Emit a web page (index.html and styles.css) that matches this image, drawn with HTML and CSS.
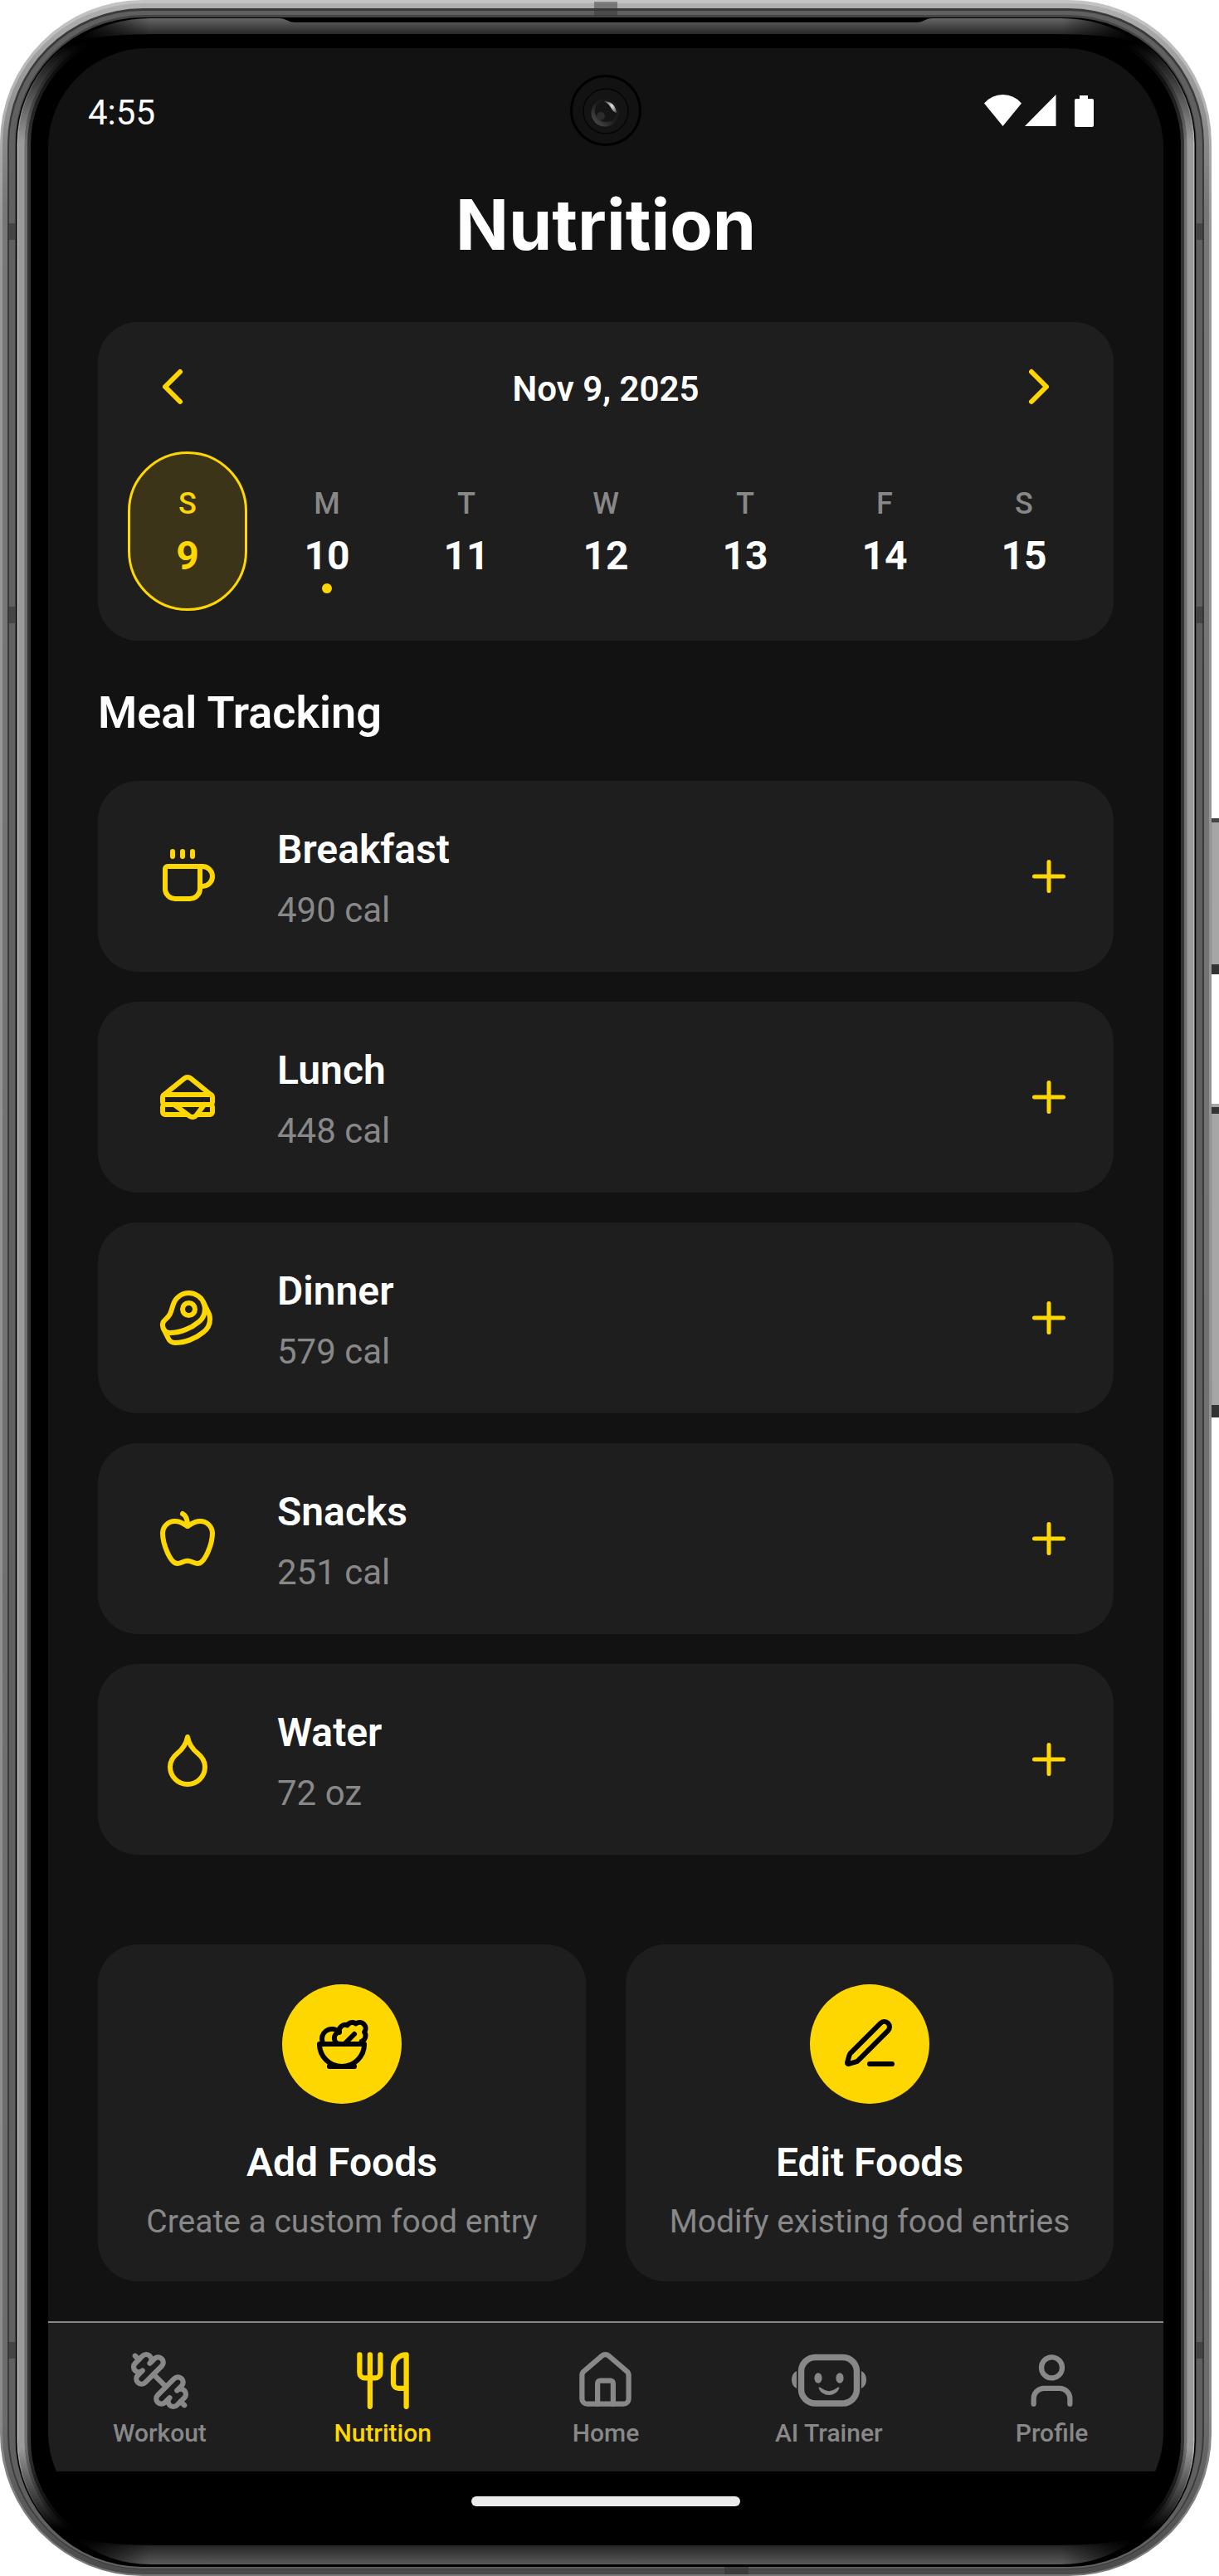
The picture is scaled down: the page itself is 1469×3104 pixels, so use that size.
FILE: index.html
```html
<!DOCTYPE html>
<html lang="en">
<head>
    <meta charset="UTF-8">
    <meta name="viewport" content="width=device-width, initial-scale=1.0">
    <title>Nutrition</title>
    <link rel="stylesheet" href="styles.css">
</head>
<body>
    <div class="phone">
        <!-- Phone body -->
        <svg class="frame" viewBox="0 0 1469 3104" aria-hidden="true">
            <defs>
                <linearGradient id="outer" x1="0" y1="0" x2="0" y2="1">
                    <stop offset="0" stop-color="#c4c4c4"/>
                    <stop offset="0.04" stop-color="#b4b4b4"/>
                    <stop offset="0.09" stop-color="#999"/>
                    <stop offset="0.93" stop-color="#8c8c8c"/>
                    <stop offset="1" stop-color="#777"/>
                </linearGradient>
                <linearGradient id="edge" x1="0" y1="0" x2="0" y2="1">
                    <stop offset="0" stop-color="#b0b0b0"/>
                    <stop offset="0.03" stop-color="#999"/>
                    <stop offset="0.08" stop-color="#777"/>
                    <stop offset="0.94" stop-color="#6c6c6c"/>
                    <stop offset="1" stop-color="#4a4a4a"/>
                </linearGradient>
                <linearGradient id="fade" x1="0" y1="0" x2="0" y2="3104" gradientUnits="userSpaceOnUse">
                    <stop offset="0.017" stop-color="#000"/>
                    <stop offset="0.055" stop-color="#fff"/>
                    <stop offset="0.95" stop-color="#fff"/>
                    <stop offset="0.982" stop-color="#000"/>
                </linearGradient>
                <linearGradient id="slabFade" x1="90" y1="0" x2="1370" y2="0" gradientUnits="userSpaceOnUse">
                    <stop offset="0" stop-color="#000"/>
                    <stop offset="0.07" stop-color="#fff"/>
                    <stop offset="0.93" stop-color="#fff"/>
                    <stop offset="1" stop-color="#000"/>
                </linearGradient>
                <linearGradient id="topSlab" x1="0" y1="0" x2="0" y2="1">
                    <stop offset="0" stop-color="#666"/>
                    <stop offset="0.3" stop-color="#4a4a4a"/>
                    <stop offset="1" stop-color="#0c0c0c"/>
                </linearGradient>
                <linearGradient id="bottomSlab" x1="0" y1="0" x2="0" y2="1">
                    <stop offset="0" stop-color="#000"/>
                    <stop offset="0.35" stop-color="#2a2a2a"/>
                    <stop offset="1" stop-color="#5a5a5a"/>
                </linearGradient>
                <linearGradient id="key" x1="0" y1="0" x2="1" y2="0">
                    <stop offset="0" stop-color="#777"/>
                    <stop offset="0.3" stop-color="#a6a6a6"/>
                    <stop offset="1" stop-color="#a6a6a6"/>
                </linearGradient>
                <mask id="sideMask" maskUnits="userSpaceOnUse" x="0" y="0" width="1469" height="3104"><rect width="1469" height="3104" fill="url(#fade)"/></mask>
                <mask id="slabMask" maskUnits="userSpaceOnUse" x="0" y="0" width="1469" height="3104"><rect width="1469" height="3104" fill="url(#slabFade)"/></mask>
            </defs>

            <!-- side keys -->
            <rect x="1458" y="986" width="11" height="188" fill="url(#key)"/>
            <rect x="1460" y="986" width="9" height="5" fill="#444"/>
            <rect x="1460" y="1162" width="9" height="12" fill="#333"/>
            <rect x="1458" y="1330" width="11" height="378" fill="url(#key)"/>
            <rect x="1460" y="1334" width="9" height="8" fill="#333"/>
            <rect x="1460" y="1693" width="9" height="15" fill="#333"/>

            <rect width="1460" height="3104" rx="172" fill="url(#outer)"/>
            <rect x="3" y="4" width="1454" height="3098" rx="169" fill="url(#edge)"/>
            <rect x="9" y="10" width="1442" height="3086" rx="163" fill="#3a3a3a"/>
            <rect x="11" y="13" width="1438" height="3082" rx="161" fill="#606060"/>
            <rect x="18" y="18" width="1424" height="3075" rx="155" fill="#444"/>
            <rect x="19" y="21" width="1422" height="3072" rx="153" fill="#000"/>

            <g mask="url(#sideMask)" fill="none">
                <rect x="21.500" y="23.500" width="1417" height="3067" rx="150" stroke="#b8b8b8" stroke-width="2"/>
                <rect x="26" y="28" width="1408" height="3058" rx="146" stroke="#9a9a9a" stroke-width="8"/>
                <rect x="31.500" y="33" width="1397" height="3048" rx="141" stroke="#707070" stroke-width="4"/>
                <rect x="35" y="37" width="1390" height="3040" rx="137" stroke="#333" stroke-width="4"/>
            </g>
            <g mask="url(#slabMask)">
                <path d="M90 50Q130 22 182 22H337Q342 22 346 24.500T356 27H1104Q1110 27 1114 24.500T1123 22H1278Q1330 22 1370 50Q1330 41 1270 41H190Q130 41 90 50Z" fill="url(#topSlab)"/>
                <path d="M90 3058Q130 3090 182 3090H1278Q1330 3090 1370 3058Q1330 3067 1270 3067H190Q130 3067 90 3058Z" fill="url(#bottomSlab)"/>
            </g>

            <!-- antenna lines -->
            <g fill="#333" fill-opacity="0.6">
                <rect x="9" y="269" width="9" height="20"/>
                <rect x="9" y="731" width="9" height="20"/>
                <rect x="9" y="2822" width="9" height="20"/>
                <rect x="1442" y="269" width="9" height="20"/>
                <rect x="1442" y="731" width="9" height="20"/>
                <rect x="1442" y="2822" width="9" height="20"/>
                <rect x="716" y="2" width="28" height="17" fill-opacity="0.45"/>
                <rect x="873" y="3093" width="29" height="9"/>
            </g>
        </svg>

        <div class="screen">
            <div class="app">
                <div class="status-bar">
                    <span class="clock">4:55</span>
                    <svg class="status-icons" viewBox="0 0 132 40" fill="#fff">
                        <path d="M0 10.500Q9 0 22.500 0T45 10.500L22.500 38Z"/>
                        <path d="M49 38L86.500 0V38Z"/>
                        <path d="M115 1h10v4h5q2 0 2 2v30q0 2-2 2h-19q-2 0-2-2V7q0-2 2-2h4z"/>
                    </svg>
                    <svg class="camera" viewBox="0 0 88 88">
                        <defs>
                            <linearGradient id="lens" x1="0" y1="1" x2="1" y2="0">
                                <stop offset="0.1" stop-color="#4a4a4a"/>
                                <stop offset="0.5" stop-color="#1c1c1c"/>
                                <stop offset="1" stop-color="#1c1c1c"/>
                            </linearGradient>
                            <linearGradient id="glint" x1="0" y1="0" x2="1" y2="1">
                                <stop offset="0" stop-color="#444"/>
                                <stop offset="0.5" stop-color="#ddd"/>
                                <stop offset="1" stop-color="#555"/>
                            </linearGradient>
                        </defs>
                        <circle cx="44" cy="44" r="41.500" fill="#121212" stroke="#000" stroke-width="3"/>
                        <circle cx="44" cy="45" r="27" fill="#141414" stroke="#050505" stroke-width="1.500"/>
                        <circle cx="43" cy="47" r="16.500" fill="url(#lens)"/>
                        <circle cx="44" cy="45" r="13" fill="#151515"/>
                        <circle cx="38" cy="51" r="5" fill="#2c2c2c"/>
                        <path d="M42 33q13 0 15 14-4-1-6-5-3-6-9-9z" fill="url(#glint)"/>
                    </svg>
                </div>

                <h1>Nutrition</h1>

                <section class="calendar">
                    <div class="calendar-header">
                        <svg class="icon" viewBox="0 0 24 24"><path d="m15 18-6-6 6-6"/></svg>
                        <span class="date">Nov 9, 2025</span>
                        <svg class="icon" viewBox="0 0 24 24"><path d="m9 18 6-6-6-6"/></svg>
                    </div>
                    <div class="week">
                        <div class="day selected"><span class="letter">S</span><span class="number">9</span></div>
                        <div class="day"><span class="letter">M</span><span class="number">10</span><i class="dot"></i></div>
                        <div class="day"><span class="letter">T</span><span class="number">11</span></div>
                        <div class="day"><span class="letter">W</span><span class="number">12</span></div>
                        <div class="day"><span class="letter">T</span><span class="number">13</span></div>
                        <div class="day"><span class="letter">F</span><span class="number">14</span></div>
                        <div class="day"><span class="letter">S</span><span class="number">15</span></div>
                    </div>
                </section>

                <h2>Meal Tracking</h2>

                <section class="meals">
                    <div class="meal">
                        <svg class="icon" viewBox="0 0 24 24"><path d="M10 2v2M14 2v2M6 2v2M16 8a1 1 0 0 1 1 1v8a4 4 0 0 1-4 4H7a4 4 0 0 1-4-4V9a1 1 0 0 1 1-1h14a4 4 0 1 1 0 8h-1"/></svg>
                        <div class="meal-info">
                            <h3>Breakfast</h3>
                            <p>490 cal</p>
                        </div>
                        <svg class="icon plus" viewBox="0 0 24 24"><path d="M5 12h14M12 5v14"/></svg>
                    </div>
                    <div class="meal">
                        <svg class="icon" viewBox="0 0 24 24"><path d="m2.370 11.223 8.372-6.777a2 2 0 0 1 2.516 0l8.371 6.777M21 15a1 1 0 0 1 1 1v2a1 1 0 0 1-1 1h-5.250M3 15a1 1 0 0 0-1 1v2a1 1 0 0 0 1 1h9M6.670 15l6.130 4.600a2 2 0 0 0 2.800-.4l3.150-4.200"/><rect x="2" y="11" width="20" height="4" rx="1"/></svg>
                        <div class="meal-info">
                            <h3>Lunch</h3>
                            <p>448 cal</p>
                        </div>
                        <svg class="icon plus" viewBox="0 0 24 24"><path d="M5 12h14M12 5v14"/></svg>
                    </div>
                    <div class="meal">
                        <svg class="icon" viewBox="0 0 24 24"><circle cx="12.5" cy="8.5" r="2.5"/><path d="M12.5 2a6.5 6.5 0 0 0-6.220 4.600c-1.100 3.130-.78 3.900-3.180 6.080A3 3 0 0 0 5 18c4 0 8.400-1.800 11.400-4.300A6.500 6.500 0 0 0 12.500 2Z"/><path d="m18.500 6 2.190 4.500a6.480 6.480 0 0 1 .31 2 6.490 6.490 0 0 1-2.600 5.200C15.400 20.200 11 22 7 22a3 3 0 0 1-2.680-1.660L2.400 16.500"/></svg>
                        <div class="meal-info">
                            <h3>Dinner</h3>
                            <p>579 cal</p>
                        </div>
                        <svg class="icon plus" viewBox="0 0 24 24"><path d="M5 12h14M12 5v14"/></svg>
                    </div>
                    <div class="meal">
                        <svg class="icon" viewBox="0 0 24 24"><path d="M12 20.940c1.500 0 2.750 1.060 4 1.060 3 0 6-8 6-12.220A4.910 4.910 0 0 0 17 5c-2.220 0-4 1.440-5 2-1-.56-2.780-2-5-2a4.900 4.900 0 0 0-5 4.780C2 14 5 22 8 22c1.250 0 2.500-1.060 4-1.060Z"/><path d="M10 2c1 .5 2 2 2 5"/></svg>
                        <div class="meal-info">
                            <h3>Snacks</h3>
                            <p>251 cal</p>
                        </div>
                        <svg class="icon plus" viewBox="0 0 24 24"><path d="M5 12h14M12 5v14"/></svg>
                    </div>
                    <div class="meal">
                        <svg class="icon" viewBox="0 0 24 24"><path d="M12 22a7 7 0 0 0 7-7c0-2-1-3.900-3-5.500s-3.500-4-4-6.500c-.5 2.500-2 4.900-4 6.500C6 11.100 5 13 5 15a7 7 0 0 0 7 7z"/></svg>
                        <div class="meal-info">
                            <h3>Water</h3>
                            <p>72 oz</p>
                        </div>
                        <svg class="icon plus" viewBox="0 0 24 24"><path d="M5 12h14M12 5v14"/></svg>
                    </div>
                </section>

                <section class="actions">
                    <div class="action">
                        <div class="circle">
                            <svg class="icon" viewBox="0 0 24 24"><path d="M7 21h10M12 21a9 9 0 0 0 9-9H3a9 9 0 0 0 9 9Z"/><path d="M11.380 12a2.400 2.400 0 0 1-.4-4.770 2.400 2.400 0 0 1 3.200-2.770 2.400 2.400 0 0 1 3.470-.63 2.400 2.400 0 0 1 3.370 3.370 2.400 2.400 0 0 1-1.100 3.700 2.510 2.510 0 0 1 .03 1.100"/><path d="m13 12 4-4M10.900 7.250A3.990 3.990 0 0 0 4 10c0 .73.2 1.410.54 2"/></svg>
                        </div>
                        <h3>Add Foods</h3>
                        <p>Create a custom food entry</p>
                    </div>
                    <div class="action">
                        <div class="circle">
                            <svg class="icon" viewBox="0 0 24 24"><path d="M12 20h9"/><path d="M16.376 3.622a1 1 0 0 1 3.002 3.002L7.368 18.635a2 2 0 0 1-.855.506l-2.872.838a.5.5 0 0 1-.62-.62l.838-2.872a2 2 0 0 1 .506-.854z"/></svg>
                        </div>
                        <h3>Edit Foods</h3>
                        <p>Modify existing food entries</p>
                    </div>
                </section>

                <nav class="tabs">
                    <div class="tab">
                        <svg class="icon" viewBox="0 0 24 24"><path d="M14.400 14.400 9.600 9.600"/><path d="M18.657 21.485a2 2 0 1 1-2.829-2.828l-1.767 1.768a2 2 0 1 1-2.829-2.829l6.364-6.364a2 2 0 1 1 2.829 2.829l-1.768 1.767a2 2 0 1 1 2.828 2.829z"/><path d="m21.500 21.500-1.400-1.400M3.900 3.900 2.500 2.500"/><path d="M6.404 12.768a2 2 0 1 1-2.829-2.829l1.768-1.767a2 2 0 1 1-2.828-2.829l2.828-2.828a2 2 0 1 1 2.829 2.828l1.767-1.768a2 2 0 1 1 2.829 2.829z"/></svg>
                        <span>Workout</span>
                    </div>
                    <div class="tab active">
                        <svg class="icon" viewBox="0 0 24 24"><path d="M3 2v7c0 1.100.9 2 2 2h4a2 2 0 0 0 2-2V2M7 2v20M21 15V2a5 5 0 0 0-5 5v6c0 1.100.9 2 2 2h3Zm0 0v7"/></svg>
                        <span>Nutrition</span>
                    </div>
                    <div class="tab">
                        <svg class="icon" viewBox="0 0 24 24"><path d="M15 21v-8a1 1 0 0 0-1-1h-4a1 1 0 0 0-1 1v8"/><path d="M3 10a2 2 0 0 1 .709-1.528l7-6a2 2 0 0 1 2.582 0l7 6A2 2 0 0 1 21 10v9a2 2 0 0 1-2 2H5a2 2 0 0 1-2-2z"/></svg>
                        <span>Home</span>
                    </div>
                    <div class="tab">
                        <svg class="bot" viewBox="0 0 92 75">
                            <rect x="12.500" y="9.500" width="67" height="55.500" rx="17" fill="none" stroke="#888" stroke-width="7.500"/>
                            <ellipse cx="33" cy="34.500" rx="4.600" ry="6.200" fill="#888"/>
                            <ellipse cx="59" cy="34.500" rx="4.600" ry="6.200" fill="#888"/>
                            <path d="M33.500 45.500q2-.5 4 1.500 8.500 6.500 17 0 2-2 4-1.500-.5 4-4.500 7-8 5-16 0-4-3-4.500-7z" fill="#888"/>
                            <path d="M7 26q-6 3-6 10.500t6 10.500zM85 26q6 3 6 10.500t-6 10.500z" fill="#888"/>
                        </svg>
                        <span>AI Trainer</span>
                    </div>
                    <div class="tab">
                        <svg class="icon" viewBox="0 0 24 24"><path d="M19 21v-2a4 4 0 0 0-4-4H9a4 4 0 0 0-4 4v2"/><circle cx="12" cy="7" r="4"/></svg>
                        <span>Profile</span>
                    </div>
                </nav>
            </div>
            <div class="home-indicator"></div>
        </div>
    </div>
</body>
</html>
```
FILE: styles.css
```css
* {
    margin: 0;
    padding: 0;
    box-sizing: border-box;
}

body {
    font-family: Roboto, sans-serif;
    background-color: #fff;
    color: #fff;
}

svg {
    display: block;
    flex-shrink: 0;
}

/* Phone */
.phone {
    position: relative;
    width: 1469px;
    height: 3104px;
    padding: 58px 67px 54px 58px;
    overflow: hidden;
}

.frame {
    position: absolute;
    top: 0;
    left: 0;
    width: 1469px;
    height: 3104px;
}

.screen {
    position: relative;
    width: 1344px;
    height: 2992px;
    border-radius: 120px;
    background-color: #000;
    overflow: hidden;
}

.app {
    height: 2920px;
    background-color: #121212;
    display: flex;
    flex-direction: column;
}

/* Status bar */
.status-bar {
    position: relative;
    height: 156px;
    padding: 0 84px 0 48px;
    display: flex;
    align-items: center;
    justify-content: space-between;
}

.clock {
    font-size: 42px;
    padding-bottom: 2px;
}

.status-icons {
    width: 132px;
    height: 40px;
    margin-top: -4px;
}

.camera {
    position: absolute;
    top: 31px;
    left: 628px;
    width: 88px;
    height: 88px;
}

/* Titles */
h1 {
    font-family: Inter, sans-serif;
    font-size: 84px;
    font-weight: 700;
    line-height: 113px;
    text-align: center;
    margin-bottom: 61px;
}

h2 {
    font-size: 54px;
    font-weight: 600;
    line-height: 64px;
    margin: 55px 60px 50px;
}

h3 {
    font-size: 48px;
    font-weight: 600;
    line-height: 56px;
}

/* Icons */
.icon {
    width: 72px;
    height: 72px;
    fill: none;
    stroke: #ffd700;
    stroke-width: 2;
    stroke-linecap: round;
    stroke-linejoin: round;
}

/* Calendar */
.calendar {
    height: 384px;
    margin: 0 60px;
    padding: 0 24px;
    border-radius: 48px;
    background-color: #1e1e1e;
}

.calendar-header {
    height: 156px;
    padding: 0 30px;
    display: flex;
    align-items: center;
    justify-content: space-between;
}

.date {
    font-size: 42px;
    font-weight: 600;
    padding-top: 5px;
}

.week {
    display: grid;
    grid-template-columns: repeat(7, 1fr);
}

.day {
    height: 192px;
    margin: 0 12px;
    padding-top: 39px;
    border: 3px solid transparent;
    border-radius: 72px;
    display: flex;
    flex-direction: column;
    align-items: center;
}

.letter {
    font-size: 36px;
    font-weight: 500;
    line-height: 42px;
    color: #888;
}

.number {
    font-size: 48px;
    font-weight: 700;
    line-height: 56px;
    margin-top: 14px;
}

.dot {
    width: 12px;
    height: 12px;
    margin-top: 5px;
    border-radius: 50%;
    background-color: #ffd700;
}

.selected {
    border-color: #ffd700;
    background-color: #3b3418;
}

.selected .letter,
.selected .number {
    color: #ffd700;
}

/* Meals */
.meals {
    margin: 0 60px;
    display: flex;
    flex-direction: column;
    gap: 36px;
}

.meal {
    height: 230px;
    padding: 0 48px 0 72px;
    border-radius: 48px;
    background-color: #1e1e1e;
    display: flex;
    align-items: center;
}

.meal-info {
    flex: 1;
    padding: 5px 0 0 72px;
}

.meal-info p {
    font-size: 42px;
    line-height: 50px;
    margin-top: 20px;
    color: #888;
}

.plus {
    width: 60px;
    height: 60px;
}

/* Add / edit cards */
.actions {
    margin: 108px 60px 48px;
    display: grid;
    grid-template-columns: 1fr 1fr;
    gap: 48px;
}

.action {
    height: 406px;
    padding-top: 48px;
    border-radius: 48px;
    background-color: #1e1e1e;
    display: flex;
    flex-direction: column;
    align-items: center;
}

.circle {
    width: 144px;
    height: 144px;
    margin-bottom: 43px;
    border-radius: 50%;
    background-color: #ffd700;
    display: flex;
    align-items: center;
    justify-content: center;
}

.circle .icon {
    stroke: #000;
}

.action p {
    font-size: 39px;
    line-height: 48px;
    margin-top: 19px;
    color: #888;
    white-space: nowrap;
}

/* Bottom tabs */
.tabs {
    height: 181px;
    padding-top: 32px;
    border-top: 2px solid #888;
    background-color: #1e1e1e;
    display: grid;
    grid-template-columns: repeat(5, 1fr);
}

.tab {
    display: flex;
    flex-direction: column;
    align-items: center;
    gap: 8px;
    font-size: 30px;
    font-weight: 500;
    line-height: 36px;
    color: #888;
}

.tab .icon {
    width: 75px;
    height: 75px;
    stroke: #888;
}

.bot {
    width: 92px;
    height: 75px;
}

.active {
    color: #ffd700;
}

.active .icon {
    stroke: #ffd700;
}

.home-indicator {
    width: 324px;
    height: 12px;
    margin: 30px auto 0;
    border-radius: 6px;
    background-color: #ececec;
}
```
